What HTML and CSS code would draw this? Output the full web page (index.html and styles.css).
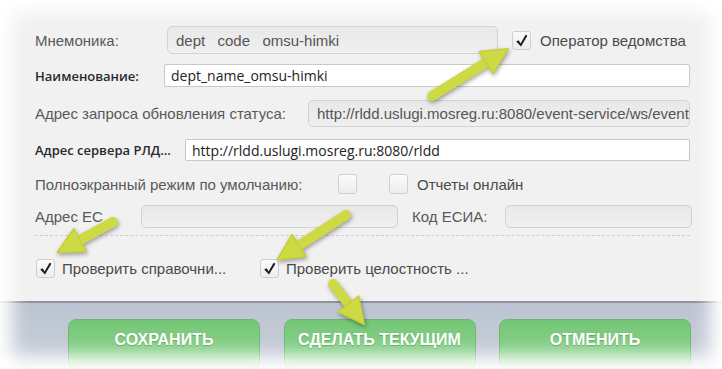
FILE: index.html
```html
<!doctype html>
<html>
    <head>
        <meta charset="utf-8">
        <title>Настройки ведомства</title>
        <link rel="stylesheet" href="styles.css">
    </head>

    <body>
        <div class="screen">
            <div class="panel">
                <div class="form">
                    <div class="row row1">
                        <div class="label lbl-mnem">Мнемоника:</div>
                        <div class="field field-off field-mnem">dept  code  omsu-himki</div>
                        <div class="check"><svg class="tick" viewBox="0 0 17 17"><path d="M3.2,9.6 L5.6,8.2 L7.6,11.4 L12.6,2.8 L14.4,3.8 L8,14.6 Z"/></svg></div>
                        <div class="checktext">Оператор ведомства</div>
                    </div>
                    <div class="row row2">
                        <div class="label label-dark lbl-name">Наименование:</div>
                        <div class="field field-on">dept_name_omsu-himki</div>
                    </div>
                    <div class="row row3">
                        <div class="label lbl-status">Адрес запроса обновления статуса:</div>
                        <div class="field field-off">http://rldd.uslugi.mosreg.ru:8080/event-service/ws/event</div>
                    </div>
                    <div class="row row4">
                        <div class="label label-dark lbl-server">Адрес сервера РЛД...</div>
                        <div class="field field-on">http://rldd.uslugi.mosreg.ru:8080/rldd</div>
                    </div>
                    <div class="row row5">
                        <div class="label lbl-full">Полноэкранный режим по умолчанию:</div>
                        <div class="check"></div>
                        <div class="check check-reports"></div>
                        <div class="checktext">Отчеты онлайн</div>
                    </div>
                    <div class="row row6">
                        <div class="label lbl-es">Адрес ЕС</div>
                        <div class="field field-off field-es"></div>
                        <div class="label lbl-esia">Код ЕСИА:</div>
                        <div class="field field-off field-esia"></div>
                    </div>
                    <div class="dashed"></div>
                    <div class="row row7">
                        <div class="check"><svg class="tick" viewBox="0 0 17 17"><path d="M3.2,9.6 L5.6,8.2 L7.6,11.4 L12.6,2.8 L14.4,3.8 L8,14.6 Z"/></svg></div>
                        <div class="checktext checktext-first">Проверить справочни...</div>
                        <div class="check"><svg class="tick" viewBox="0 0 17 17"><path d="M3.2,9.6 L5.6,8.2 L7.6,11.4 L12.6,2.8 L14.4,3.8 L8,14.6 Z"/></svg></div>
                        <div class="checktext">Проверить целостность ...</div>
                    </div>
                </div>
                <div class="footer">
                    <div class="button">СОХРАНИТЬ</div>
                    <div class="button">СДЕЛАТЬ ТЕКУЩИМ</div>
                    <div class="button">ОТМЕНИТЬ</div>
                </div>
            </div>

            <svg class="arrows" width="722" height="369" viewBox="0 0 722 369">
                <defs>
                    <marker id="head" markerUnits="userSpaceOnUse" markerWidth="28" markerHeight="28" refX="1" refY="14" orient="auto">
                        <path d="M1,1 L27,14 L1,27 z" fill="#cdda45" stroke="#c4d03a" stroke-width="1.5" stroke-linejoin="round"/>
                    </marker>
                </defs>
                <g class="arrow">
                    <line x1="432" y1="96" x2="486" y2="62.5" marker-end="url(#head)"/>
                    <line x1="113" y1="222" x2="80" y2="240" marker-end="url(#head)"/>
                    <line x1="346" y1="215" x2="299" y2="245.5" marker-end="url(#head)"/>
                    <line x1="333" y1="284" x2="348.5" y2="304" marker-end="url(#head)"/>
                </g>
            </svg>

            <div class="fade"></div>
        </div>
    </body>

</html>
```

FILE: styles.css
```css
body{
    margin: 0;
    background-color: white;
}

.screen{
    position: relative;
    width: 722px;
    height: 369px;
    overflow: hidden;
    background-color: white;
    font-family: 'Liberation Sans', Arial, sans-serif;
}

.panel{
    height: 369px;
    background-color: #f1f1f1;
    display: flex;
    flex-direction: column;
}

.form{
    padding: 26px 32px 0 35px;
    height: 279px;
}

.row{
    display: flex;
    align-items: center;
}

.row1{ height: 28px; }
.row2{ height: 23px; margin-top: 10px; }
.row3{ height: 27px; margin-top: 13px; }
.row4{ height: 22px; margin-top: 12px; }
.row5{ height: 20px; margin-top: 13px; }
.row6{ height: 23px; margin-top: 11px; }
.row7{ height: 19px; margin-top: 23px; padding-left: 1px; }

.label{
    flex: none;
    font-size: 15px;
    color: #595959;
    white-space: nowrap;
}

.label-dark{
    font-family: 'Open Sans', 'Noto Sans', sans-serif;
    font-size: 13px;
    font-weight: 600;
    color: #2a2a2a;
}

.lbl-mnem{ width: 132px; }
.lbl-name{ width: 129px; }
.lbl-status{ width: 273px; }
.lbl-server{ width: 150px; }
.lbl-full{ width: 303px; }
.lbl-es{ width: 106px; }
.lbl-esia{ width: 93px; margin-left: 14px; }

.field{
    box-sizing: border-box;
    height: 100%;
    flex: 1;
    min-width: 0;
    overflow: hidden;
    white-space: pre;
    display: flex;
    align-items: center;
}

.field-off{
    border: 1px solid #d2d2d2;
    border-radius: 5px;
    background: linear-gradient(#e8e8e8, #f0f0f0);
    padding-left: 8px;
    font-size: 15px;
    color: #555;
}

.field-on{
    border: 1px solid #c9c9c9;
    border-radius: 2px;
    background-color: white;
    padding-left: 6px;
    font-family: 'Open Sans', 'Noto Sans', sans-serif;
    font-size: 14px;
    color: #222;
}

.field-mnem{ flex: none; width: 331px; word-spacing: 2px; }
.field-es{ flex: none; width: 257px; }
.field-esia{ margin-right: -2px; }

.check{
    flex: none;
    box-sizing: border-box;
    width: 19px;
    height: 19px;
    border: 1px solid #cfcfcf;
    border-radius: 3px;
    background: linear-gradient(#fbfbfb, #ececec);
    display: flex;
}

.tick{
    width: 17px;
    height: 17px;
    fill: #1a1a1a;
}

.row1 .check{ margin-left: 14px; }
.row5 .check{ height: 20px; }
.check-reports{ margin-left: 32px; }

.checktext{
    margin-left: 9px;
    font-size: 15px;
    color: #4a4a4a;
    white-space: nowrap;
}

.row7 .checktext{ margin-left: 7px; }

.checktext-first{
    width: 198px;
}

.dashed{
    margin-top: 7px;
    border-top: 1px dashed #cdcdcd;
}

.footer{
    flex: 1;
    border-top: 2px solid #8e939a;
    background: linear-gradient(#bcc4d1, #c9d0dc);
    padding: 16px 0 0 68px;
    display: flex;
    gap: 23.5px;
}

.button{
    box-sizing: border-box;
    width: 192px;
    height: 50px;
    padding-top: 10px;
    border-radius: 8px;
    border: 1px solid #69b86b;
    background: linear-gradient(#74c676, #88d08a 60%, #a3dba4);
    color: white;
    font-size: 16px;
    font-weight: bold;
    text-align: center;
    line-height: 20px;
    text-shadow: 0 1px 1px rgba(60, 120, 60, 0.5);
}

.arrows{
    position: absolute;
    left: 0;
    top: 0;
    filter: drop-shadow(1px 2px 2px rgba(0, 0, 0, 0.35));
}

.arrow line{
    stroke: #cdda45;
    stroke-width: 10;
    stroke-linecap: round;
}

.fade{
    position: absolute;
    left: 0;
    top: 0;
    right: 0;
    bottom: 0;
    box-shadow: inset 0 0 18px 12px white;
    pointer-events: none;
}
```
